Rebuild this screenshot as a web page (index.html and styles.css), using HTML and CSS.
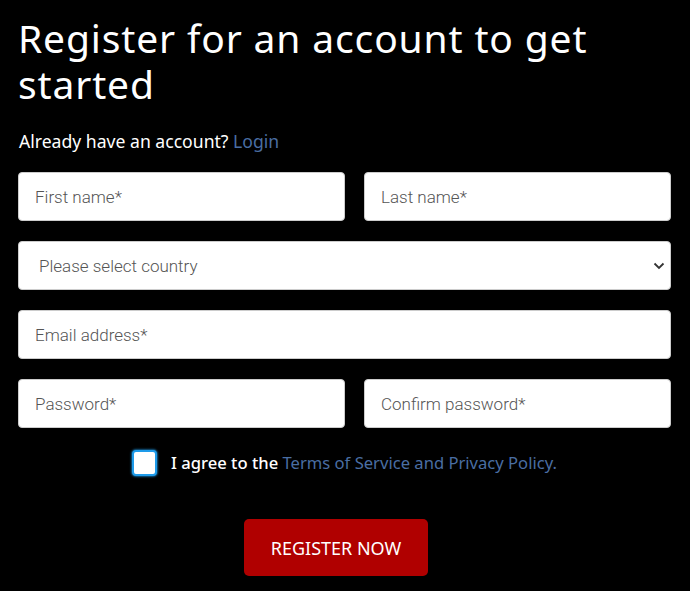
FILE: index.html
```html
<!DOCTYPE html>
<html lang="en">
<head>
<meta charset="utf-8">
<title>Register</title>
<link rel="stylesheet" href="styles.css">
</head>
<body>
<main class="page">
  <h1 class="title">Register for an account to get started</h1>
  <p class="subtitle">Already have an account? <a class="link" href="#">Login</a></p>
  <form class="form">
    <div class="row two">
      <input class="field" type="text" placeholder="First name*">
      <input class="field" type="text" placeholder="Last name*">
    </div>
    <div class="row">
      <div class="select-wrap">
        <select class="field select">
          <option>Please select country</option>
        </select>
        <svg class="chev" width="12" height="8" viewBox="0 0 12 8"><path d="M1.5 1.5 L6 6 L10.5 1.5" fill="none" stroke="#333" stroke-width="1.8"/></svg>
      </div>
    </div>
    <div class="row">
      <input class="field" type="email" placeholder="Email address*">
    </div>
    <div class="row two">
      <input class="field" type="password" placeholder="Password*">
      <input class="field" type="password" placeholder="Confirm password*">
    </div>
    <label class="agree">
      <span class="box"></span>
      <span class="agree-text"><span class="strong">I agree to the</span> <a class="link" href="#">Terms of Service and Privacy Policy.</a></span>
    </label>
    <div class="actions">
      <button class="btn" type="button">REGISTER NOW</button>
    </div>
  </form>
</main>
</body>
</html>
```
FILE: styles.css
```css
html, body {
  margin: 0;
  padding: 0;
  background: #000;
}
.page {
  padding: 0 19px 0 18px;
  font-family: "Noto Sans", "Lato", sans-serif;
  color: #fff;
}
.title {
  margin: 0;
  padding-top: 15px;
  font-weight: 400;
  font-size: 39px;
  line-height: 46px;
  letter-spacing: 0.85px;
}
.subtitle {
  margin: 22px 0 0 1px;
  font-size: 17.6px;
  line-height: 24px;
}
.link {
  color: #4a6ea3;
  text-decoration: none;
}
.form {
  margin-top: 19px;
}
.row {
  display: flex;
  gap: 19px;
  margin-bottom: 20px;
}
.row.two .field:first-child {
  flex: 0 0 327px;
}
.row.two .field:last-child {
  flex: 1;
}
.field {
  box-sizing: border-box;
  width: 100%;
  height: 49px;
  border: 1px solid #ccc;
  border-radius: 4px;
  background: #fff;
  padding: 0 16px;
  font-family: Roboto, sans-serif;
  font-size: 17px;
  font-weight: 300;
  color: #333;
  outline: none;
}
.field::placeholder {
  color: #555;
}
.select-wrap {
  position: relative;
  width: 100%;
}
.select {
  appearance: none;
  -webkit-appearance: none;
  padding-left: 20px;
  color: #555;
}
.chev {
  position: absolute;
  right: 6px;
  top: 21px;
  pointer-events: none;
}
.agree {
  display: flex;
  align-items: center;
  justify-content: center;
  gap: 14px;
  margin-top: 22px;
}
.box {
  box-sizing: border-box;
  width: 25px;
  height: 26px;
  border: 2px solid #1e9bea;
  border-radius: 4px;
  background: #fff;
  box-shadow: 0 0 2px 1px rgba(30, 155, 234, 0.6);
}
.agree-text {
  font-size: 16.6px;
  line-height: 24px;
}
.strong {
  font-weight: 500;
}
.actions {
  display: flex;
  justify-content: center;
  margin-top: 43px;
  padding-right: 17px;
}
.btn {
  width: 184px;
  height: 57px;
  border: none;
  border-radius: 5px;
  background: #b00000;
  color: #fff;
  font-family: "Noto Sans", "Lato", sans-serif;
  font-size: 18px;
  letter-spacing: 0;
}
```
